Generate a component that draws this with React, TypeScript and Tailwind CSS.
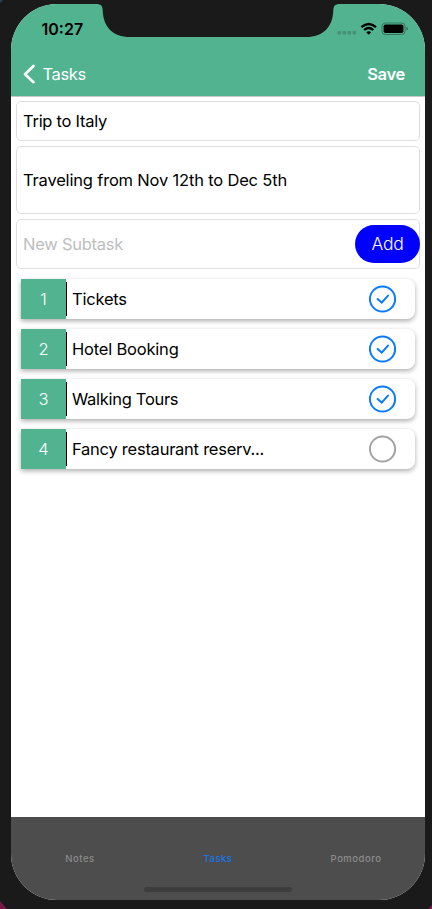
import React from "react";

type Subtask = { title: string; done: boolean; tracking: string };

const subtasks: Subtask[] = [
  { title: "Tickets", done: true, tracking: "tracking-[-0.22px]" },
  { title: "Hotel Booking", done: true, tracking: "tracking-[-0.2px]" },
  { title: "Walking Tours", done: true, tracking: "tracking-[-0.3px]" },
  { title: "Fancy restaurant reserv...", done: false, tracking: "tracking-[-0.25px]" },
];

function Notch() {
  return (
    <svg className="absolute left-0 top-0" width="414" height="40" viewBox="11 4 414 40" fill="#1a1a1a">
      <path d="M96 3V4C101 4 102.5 6 102.7 10C103 27 113 37 130 37H306C323 37 333 27 333.3 10C333.5 6 335 4 340 4V3Z" />
    </svg>
  );
}

function StatusIcons() {
  return (
    <svg width="72" height="14" viewBox="337 22 72 14">
      <g fill="#469174">
        <rect x="337.5" y="31" width="3.6" height="3.6" rx=".8" />
        <rect x="342.5" y="31" width="3.6" height="3.6" rx=".8" />
        <rect x="347.5" y="31" width="3.6" height="3.6" rx=".8" />
        <rect x="352.5" y="31" width="3.6" height="3.6" rx=".8" />
      </g>
      <g fill="none" stroke="#000" strokeWidth="2.3">
        <path d="M361.4 27.2Q368.7 20.8 376 27.2" />
        <path d="M364.1 30Q368.7 26 373.3 30" />
      </g>
      <path d="M366.2 32.2Q368.7 30.3 371.2 32.2L368.7 34.8Z" />
      <rect x="382" y="23" width="23" height="11.5" rx="3.3" fill="none" stroke="#34745d" />
      <rect x="383.6" y="24.5" width="19.8" height="8.5" rx="1.8" />
      <path d="M406.4 26.8Q408 27.4 408 28.8T406.4 30.8Z" fill="#34745d" />
    </svg>
  );
}

function CheckCircle({ done }: { done: boolean }) {
  return (
    <svg width="28" height="28" viewBox="0 0 28 28" fill="none" stroke={done ? "#0a7aff" : "#a3a3a3"} strokeWidth="2">
      <circle cx="13.5" cy="14" r="12.6" />
      {done && <path d="M8.6 14L12.7 17.6L19 10.6" strokeLinecap="round" />}
    </svg>
  );
}

function SubtaskRow({ task, index }: { task: Subtask; index: number }) {
  return (
    <li className="flex h-10 items-center rounded-r-[8px] bg-white pr-[18px] shadow-[0_2px_5px_rgba(0,0,0,0.33)]">
      <span className="flex h-10 w-[45px] items-center justify-center bg-[#52b391] font-light text-white">{index + 1}</span>
      <span className="h-[34px] w-px bg-black" />
      <span className={"ml-[5px] flex-1 whitespace-nowrap " + task.tracking}>{task.title}</span>
      <CheckCircle done={task.done} />
    </li>
  );
}

export default function App() {
  return (
    <div className="h-[909px] w-[432px] overflow-hidden bg-[linear-gradient(#2d4055_50%,#7a1649_50%)] font-['Inter','Liberation_Sans',sans-serif] text-[16.5px] leading-5 text-black">
      <div className="h-[909px] w-[432px] bg-[#1a1a1a] pl-[11px] pt-1 [clip-path:polygon(3px_0,100%_0,100%_905px,428px_100%,7px_100%,0_901px,0_3px)]">
        <div className="relative flex h-[896px] w-[414px] flex-col overflow-hidden rounded-[46px] bg-white">
          <header className="h-[93px] border-b border-[#c8cac9] bg-[#52b391]">
            <div className="flex h-[50px] items-center justify-between pl-[30.5px] pr-4">
              <span className="text-[16px] font-semibold">10:27</span>
              <StatusIcons />
            </div>
            <div className="flex h-10 items-center justify-between pl-3 pr-5 text-white">
              <div className="flex items-center">
                <svg width="13" height="20" viewBox="0 0 13 20" fill="none" stroke="white" strokeWidth="2.6" strokeLinecap="round" strokeLinejoin="round">
                  <path d="M10.5 2L2 10.3L10.5 18.2" />
                </svg>
                <span className="ml-[6.5px] tracking-[-0.35px]">Tasks</span>
              </div>
              <span className="font-semibold tracking-[-0.3px]">Save</span>
            </div>
          </header>
          <main className="flex flex-1 flex-col gap-[5px] px-[5px] pt-1">
            <div className="flex h-10 items-center rounded-[5px] border border-[#dedede] pl-1.5 tracking-[-0.27px]">Trip to Italy</div>
            <div className="flex h-[68px] items-center rounded-[5px] border border-[#dedede] pl-1.5 tracking-[-0.18px]">Traveling from Nov 12th to Dec 5th</div>
            <div className="flex h-[50px] items-center justify-between rounded-[5px] border border-[#dedede] pl-1.5 tracking-[-0.25px] text-[#bebebe]">
              <span>New Subtask</span>
              <button className="-mr-px h-[38px] w-[65px] rounded-full bg-[#0000ff] text-[17.5px] font-light tracking-[-0.3px] text-white">Add</button>
            </div>
            <ul className="mt-[5px] flex flex-col gap-2.5 px-[5px]">
              {subtasks.map((task, i) => <SubtaskRow key={task.title} task={task} index={i} />)}
            </ul>
          </main>
          <footer className="flex h-[83px] flex-col bg-[#4d4d4d] text-[9.5px] font-medium">
            <nav className="grid h-[70px] grid-cols-3 pt-8 text-center tracking-[0.5px] text-[#8b8b8b]">
              <span>Notes</span>
              <span className="text-[#1677e8]">Tasks</span>
              <span>Pomodoro</span>
            </nav>
            <div className="mx-auto h-[5px] w-[148px] rounded-full bg-[#3d3d3d]" />
          </footer>
          <Notch />
        </div>
      </div>
    </div>
  );
}
